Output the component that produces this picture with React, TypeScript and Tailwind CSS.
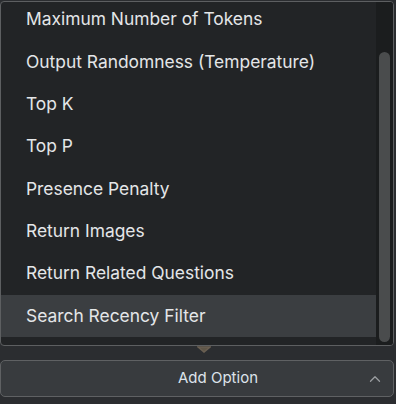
import { ChevronUp } from "lucide-react";

const options = [
  "Maximum Number of Tokens",
  "Output Randomness (Temperature)",
  "Top K",
  "Top P",
  "Presence Penalty",
  "Return Images",
  "Return Related Questions",
  "Search Recency Filter",
];

export default function App() {
  return (
    <div
      className="h-[404px] w-[396px] overflow-hidden bg-[#2b2d30] pt-px text-[#e4e6e8]"
      style={{ fontFamily: "Inter, 'Noto Sans', sans-serif" }}
    >
      <div className="relative mr-[2px] flex h-[345px] overflow-hidden rounded-[4px] border border-[#5d5f61] bg-[#222426]">
        <ul className="mt-[-4px] flex-1">
          {options.map((label, i) => (
            <li
              key={label}
              className={`flex h-[42.4px] items-center pl-[25px] text-[17.4px] ${
                i === options.length - 1 ? "bg-[#3b3e41]" : ""
              }`}
            >
              {label}
            </li>
          ))}
        </ul>
        <div className="flex w-[17px] justify-center bg-[#1b1d1e] pt-[50px] pb-[3px]">
          <div className="w-[11px] rounded-full bg-[#4a4c4d]" />
        </div>
      </div>
      <div className="flex h-[14px] justify-center pl-[12px]">
        <svg width="14" height="8" viewBox="0 0 14 8">
          <path d="M1 1 L7 6 L13 1 Z" fill="#5f5648" stroke="#6a5f52" strokeWidth="1.5" />
        </svg>
      </div>
      <button className="relative mr-[2px] flex h-[37px] w-[394px] items-center justify-center rounded-[5px] border border-[#5f6163] bg-[#383b3e] text-[15px] text-[#dde3ea]">
        <span className="pl-[42px]">Add Option</span>
        <ChevronUp className="absolute right-[9px] h-[18px] w-[18px] text-[#9a9da0]" strokeWidth={1.75} />
      </button>
    </div>
  );
}
